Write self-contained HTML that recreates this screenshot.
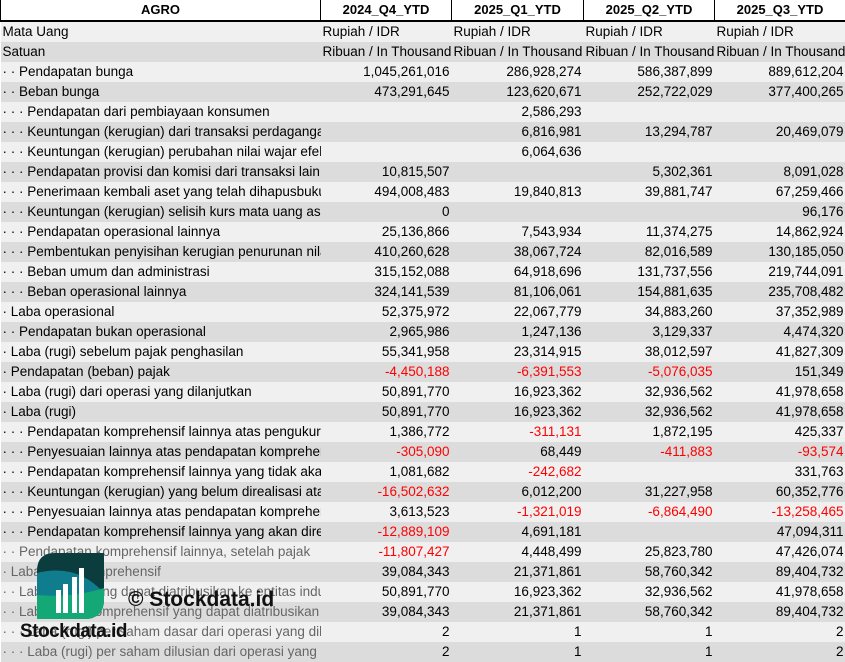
<!DOCTYPE html>
<html><head><meta charset="utf-8"><style>
body{margin:0;width:845px;height:661px;overflow:hidden;background:#fff;font-family:"Liberation Sans",Calibri,sans-serif;font-size:13.5px;color:#000;position:relative}
table{border-collapse:collapse;table-layout:fixed;width:845px;position:absolute;left:0;top:0}
td{height:20px;padding:0 2px;white-space:nowrap;overflow:hidden;line-height:20px;box-sizing:border-box}
tr.h td{font-weight:bold;text-align:center;background:#fff;border-left:1px solid #000;border-right:1px solid #000;border-bottom:2px solid #000;height:21px;font-size:13px}
tr:nth-child(even) td{background:#f0f0f0}
tr:nth-child(odd):not(.h) td{background:#dcdcdc}
td.n{text-align:right}
.r{color:#f00}
.g td:first-child{color:#666}
</style></head><body>
<table>
<colgroup><col style="width:320px"><col style="width:131px"><col style="width:132px"><col style="width:131px"><col style="width:131px"></colgroup>
<tr class="h"><td>AGRO</td><td>2024_Q4_YTD</td><td>2025_Q1_YTD</td><td>2025_Q2_YTD</td><td>2025_Q3_YTD</td></tr>
<tr><td>Mata Uang</td><td>Rupiah / IDR</td><td>Rupiah / IDR</td><td>Rupiah / IDR</td><td>Rupiah / IDR</td></tr>
<tr><td>Satuan</td><td>Ribuan / In Thousand</td><td>Ribuan / In Thousand</td><td>Ribuan / In Thousand</td><td>Ribuan / In Thousand</td></tr>
<tr><td>· · Pendapatan bunga</td><td class="n">1,045,261,016</td><td class="n">286,928,274</td><td class="n">586,387,899</td><td class="n">889,612,204</td></tr>
<tr><td>· · Beban bunga</td><td class="n">473,291,645</td><td class="n">123,620,671</td><td class="n">252,722,029</td><td class="n">377,400,265</td></tr>
<tr><td>· · · Pendapatan dari pembiayaan konsumen</td><td class="n"></td><td class="n">2,586,293</td><td class="n"></td><td class="n"></td></tr>
<tr><td>· · · Keuntungan (kerugian) dari transaksi perdagangan efek yang telah dir</td><td class="n"></td><td class="n">6,816,981</td><td class="n">13,294,787</td><td class="n">20,469,079</td></tr>
<tr><td>· · · Keuntungan (kerugian) perubahan nilai wajar efek</td><td class="n"></td><td class="n">6,064,636</td><td class="n"></td><td class="n"></td></tr>
<tr><td>· · · Pendapatan provisi dan komisi dari transaksi lain</td><td class="n">10,815,507</td><td class="n"></td><td class="n">5,302,361</td><td class="n">8,091,028</td></tr>
<tr><td>· · · Penerimaan kembali aset yang telah dihapusbukukan</td><td class="n">494,008,483</td><td class="n">19,840,813</td><td class="n">39,881,747</td><td class="n">67,259,466</td></tr>
<tr><td>· · · Keuntungan (kerugian) selisih kurs mata uang asing</td><td class="n">0</td><td class="n"></td><td class="n"></td><td class="n">96,176</td></tr>
<tr><td>· · · Pendapatan operasional lainnya</td><td class="n">25,136,866</td><td class="n">7,543,934</td><td class="n">11,374,275</td><td class="n">14,862,924</td></tr>
<tr><td>· · · Pembentukan penyisihan kerugian penurunan nilai</td><td class="n">410,260,628</td><td class="n">38,067,724</td><td class="n">82,016,589</td><td class="n">130,185,050</td></tr>
<tr><td>· · · Beban umum dan administrasi</td><td class="n">315,152,088</td><td class="n">64,918,696</td><td class="n">131,737,556</td><td class="n">219,744,091</td></tr>
<tr><td>· · · Beban operasional lainnya</td><td class="n">324,141,539</td><td class="n">81,106,061</td><td class="n">154,881,635</td><td class="n">235,708,482</td></tr>
<tr><td>· Laba operasional</td><td class="n">52,375,972</td><td class="n">22,067,779</td><td class="n">34,883,260</td><td class="n">37,352,989</td></tr>
<tr><td>· · Pendapatan bukan operasional</td><td class="n">2,965,986</td><td class="n">1,247,136</td><td class="n">3,129,337</td><td class="n">4,474,320</td></tr>
<tr><td>· Laba (rugi) sebelum pajak penghasilan</td><td class="n">55,341,958</td><td class="n">23,314,915</td><td class="n">38,012,597</td><td class="n">41,827,309</td></tr>
<tr><td>· Pendapatan (beban) pajak</td><td class="n r">-4,450,188</td><td class="n r">-6,391,553</td><td class="n r">-5,076,035</td><td class="n">151,349</td></tr>
<tr><td>· Laba (rugi) dari operasi yang dilanjutkan</td><td class="n">50,891,770</td><td class="n">16,923,362</td><td class="n">32,936,562</td><td class="n">41,978,658</td></tr>
<tr><td>· Laba (rugi)</td><td class="n">50,891,770</td><td class="n">16,923,362</td><td class="n">32,936,562</td><td class="n">41,978,658</td></tr>
<tr><td>· · · Pendapatan komprehensif lainnya atas pengukuran</td><td class="n">1,386,772</td><td class="n r">-311,131</td><td class="n">1,872,195</td><td class="n">425,337</td></tr>
<tr><td>· · · Penyesuaian lainnya atas pendapatan komprehensif</td><td class="n r">-305,090</td><td class="n">68,449</td><td class="n r">-411,883</td><td class="n r">-93,574</td></tr>
<tr><td>· · · Pendapatan komprehensif lainnya yang tidak akan</td><td class="n">1,081,682</td><td class="n r">-242,682</td><td class="n"></td><td class="n">331,763</td></tr>
<tr><td>· · · Keuntungan (kerugian) yang belum direalisasi atas</td><td class="n r">-16,502,632</td><td class="n">6,012,200</td><td class="n">31,227,958</td><td class="n">60,352,776</td></tr>
<tr><td>· · · Penyesuaian lainnya atas pendapatan komprehensif</td><td class="n">3,613,523</td><td class="n r">-1,321,019</td><td class="n r">-6,864,490</td><td class="n r">-13,258,465</td></tr>
<tr><td>· · · Pendapatan komprehensif lainnya yang akan direklasifikasi</td><td class="n r">-12,889,109</td><td class="n">4,691,181</td><td class="n"></td><td class="n">47,094,311</td></tr>
<tr class="g"><td>· · Pendapatan komprehensif lainnya, setelah pajak</td><td class="n r">-11,807,427</td><td class="n">4,448,499</td><td class="n">25,823,780</td><td class="n">47,426,074</td></tr>
<tr class="g"><td>· Laba (rugi) komprehensif</td><td class="n">39,084,343</td><td class="n">21,371,861</td><td class="n">58,760,342</td><td class="n">89,404,732</td></tr>
<tr class="g"><td>· · Laba (rugi) yang dapat diatribusikan ke entitas induk</td><td class="n">50,891,770</td><td class="n">16,923,362</td><td class="n">32,936,562</td><td class="n">41,978,658</td></tr>
<tr class="g"><td>· · Laba (rugi) komprehensif yang dapat diatribusikan kepada</td><td class="n">39,084,343</td><td class="n">21,371,861</td><td class="n">58,760,342</td><td class="n">89,404,732</td></tr>
<tr class="g"><td>· · · Laba (rugi) per saham dasar dari operasi yang dilanjutkan</td><td class="n">2</td><td class="n">1</td><td class="n">1</td><td class="n">2</td></tr>
<tr class="g"><td>· · · Laba (rugi) per saham dilusian dari operasi yang dilanjutkan</td><td class="n">2</td><td class="n">1</td><td class="n">1</td><td class="n">2</td></tr>
</table>
<svg style="position:absolute;left:37px;top:553px" width="67" height="66" viewBox="0 0 67 66">
<defs><clipPath id="c"><path d="M18 0H67V46Q67 66 47 66H0V18Q0 0 18 0Z"/></clipPath></defs>
<g clip-path="url(#c)">
<rect width="67" height="66" fill="#0b3d3f"/>
<path d="M0 20Q40 10 67 40V66H0Z" fill="#0f7d8e"/>
<path d="M0 42Q35 45 67 35V66H0Z" fill="#14a876"/>
</g>
<rect x="19" y="37" width="5" height="23" fill="#fff"/>
<rect x="26" y="31" width="5" height="29" fill="#fff"/>
<rect x="35" y="24" width="5" height="36" fill="#fff"/>
<rect x="42" y="15" width="5" height="45" fill="#fff"/>
</svg>
<div style="position:absolute;left:20px;top:621px;font:bold 19px 'Liberation Sans',sans-serif;color:#111;letter-spacing:-0.5px">Stockdata.id</div>
<div style="position:absolute;left:128px;top:588px;font:bold 21px 'Liberation Sans',sans-serif;color:#111">© Stockdata.id</div>
</body></html>
